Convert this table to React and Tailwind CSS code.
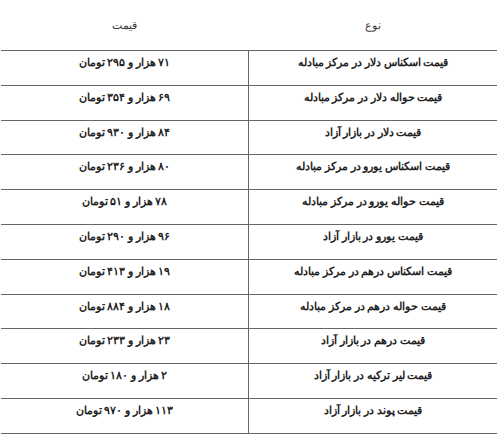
const rows = [
  ["قیمت اسکناس دلار در مرکز مبادله", "۷۱ هزار و ۲۹۵ تومان"],
  ["قیمت حواله دلار در مرکز مبادله", "۶۹ هزار و ۳۵۴ تومان"],
  ["قیمت دلار در بازار آزاد", "۸۴ هزار و ۹۳۰ تومان"],
  ["قیمت اسکناس یورو در مرکز مبادله", "۸۰ هزار و ۲۳۶ تومان"],
  ["قیمت حواله یورو در مرکز مبادله", "۷۸ هزار و ۵۱ تومان"],
  ["قیمت یورو در بازار آزاد", "۹۶ هزار و ۲۹۰ تومان"],
  ["قیمت اسکناس درهم در مرکز مبادله", "۱۹ هزار و ۴۱۳ تومان"],
  ["قیمت حواله درهم در مرکز مبادله", "۱۸ هزار و ۸۸۴ تومان"],
  ["قیمت درهم در بازار آزاد", "۲۳ هزار و ۲۳۳ تومان"],
  ["قیمت لیر ترکیه در بازار آزاد", "۲ هزار و ۱۸۰ تومان"],
  ["قیمت پوند در بازار آزاد", "۱۱۳ هزار و ۹۷۰ تومان"],
];

export default function App() {
  return (
    <div
      dir="rtl"
      className="bg-white w-[498px] h-[437px] px-px text-[10.5px] text-[#222] font-['Noto_Sans',sans-serif]"
    >
      <div className="flex h-[50px] items-center text-[11px] text-[#333]">
        <div className="w-[249px] text-center">نوع</div>
        <div className="flex-1 text-center">قیمت</div>
      </div>
      <div className="border-b border-[#666]">
        {rows.map(([type, price], i) => (
          <div key={i} className="flex h-[34.8px] border-t border-[#666] font-bold">
            <div className="w-[249px] border-l border-[#666] text-center pt-[4px]">{type}</div>
            <div className="flex-1 text-center pt-[4px]">{price}</div>
          </div>
        ))}
      </div>
    </div>
  );
}
